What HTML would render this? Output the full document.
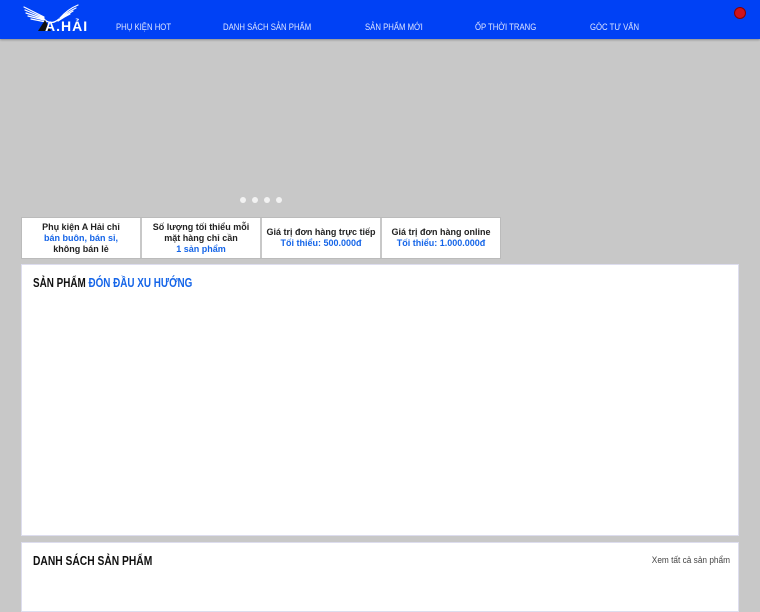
<!DOCTYPE html>
<html><head><meta charset="utf-8"><style>
*{margin:0;padding:0;box-sizing:border-box}
body{width:760px;height:600px;overflow:hidden;background:#c8c8c8;font-family:"Liberation Sans",Arial,sans-serif}
.hdr{position:absolute;left:0;top:0;width:760px;height:39px;background:#0041f5;box-shadow:0 1px 2px rgba(0,0,0,.3)}
.nav{position:absolute;top:22px;font-size:9px;color:#dfe6ff;white-space:nowrap;transform:scaleX(.86);transform-origin:left}
.dot{position:absolute;top:197px;width:6px;height:6px;border-radius:50%;background:#f2f2f2}
.feat{position:absolute;top:217px;left:21px;display:flex;background:#fff;border:1px solid #bbb}
.feat div{width:120px;height:40px;border-right:2px solid #c8c8c8;display:flex;flex-direction:column;justify-content:center;align-items:center;font-size:9px;font-weight:bold;line-height:11px;text-align:center;color:#222}
.feat div:last-child{border-right:none;width:118px}
.b{color:#1565e8}
.sec{position:absolute;left:21px;width:718px;background:#fff;border:1px solid #dde}
h2{position:absolute;left:11px;font-size:13px;font-weight:bold;color:#111;white-space:nowrap;transform-origin:left}
</style></head><body>
<div class="hdr">
<svg style="position:absolute;left:20px;top:3px" width="75" height="32" viewBox="0 0 75 32">
<g stroke="#fff" stroke-width="1.2" fill="none" stroke-linecap="round">
<path d="M4 4 L24 14 M5 7 L24 15 M6 10 L24 16 M8 13 L24 17 M11 16 L26 19"/>
<path d="M58 2 Q48 6 40 15 M56 5 Q47 9 40 16 M53 8 Q46 12 39 17 M50 11 Q44 14 38 18"/>
<path d="M24 16 Q31 23 39 16"/>
</g>
<path d="M18 28 L25 17 L31 28 Z" fill="#111"/>
<text x="25" y="28" fill="#fff" font-family="Liberation Sans" font-weight="bold" font-size="14" letter-spacing="1">A.HẢI</text>
</svg>
<span class="nav" style="left:116px">PHỤ KIỆN HOT</span>
<span class="nav" style="left:223px">DANH SÁCH SẢN PHẨM</span>
<span class="nav" style="left:365px">SẢN PHẨM MỚI</span>
<span class="nav" style="left:475px">ỐP THỜI TRANG</span>
<span class="nav" style="left:590px">GÓC TƯ VẤN</span>
<div style="position:absolute;left:734px;top:7px;width:12px;height:12px;border-radius:50%;background:#d0121b;border:1px solid #800"></div>
</div>
<div class="dot" style="left:240px"></div><div class="dot" style="left:252px"></div><div class="dot" style="left:264px"></div><div class="dot" style="left:276px"></div>
<div class="feat">
<div><span>Phụ kiện A Hải chỉ</span><span class="b">bán buôn, bán sỉ,</span><span>không bán lẻ</span></div>
<div><span>Số lượng tối thiểu mỗi</span><span>mặt hàng chỉ cần</span><span class="b">1 sản phẩm</span></div>
<div><span>Giá trị đơn hàng trực tiếp</span><span class="b">Tối thiểu: 500.000đ</span></div>
<div><span>Giá trị đơn hàng online</span><span class="b">Tối thiểu: 1.000.000đ</span></div>
</div>
<div class="sec" style="top:264px;height:272px"><h2 style="top:10px;transform:scaleX(.76)">SẢN PHẨM <span class="b">ĐÓN ĐẦU XU HƯỚNG</span></h2></div>
<div class="sec" style="top:542px;height:70px"><h2 style="top:10px;transform:scaleX(.79)">DANH SÁCH SẢN PHẨM</h2>
<span style="position:absolute;right:8px;top:12px;font-size:9px;color:#444;transform:scaleX(.92);transform-origin:right">Xem tất cả sản phẩm</span></div>
</body></html>
